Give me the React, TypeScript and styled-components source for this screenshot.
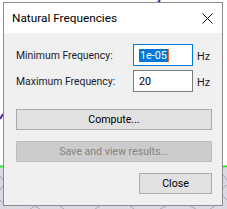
import React from "react";
import styled, { createGlobalStyle } from "styled-components";

const Global = createGlobalStyle`
  html, body { margin: 0; padding: 0; background: #ffffff; }
  body { width: 227px; height: 209px; overflow: hidden; font-family: Roboto, "Liberation Sans", Arial, sans-serif; }
`;

const Desktop = styled.div`
  position: relative;
  width: 227px;
  height: 209px;
  padding: 2px 0 0 3px;
  box-sizing: border-box;
  background: #ffffff;
`;

const Backdrop = styled.svg`
  position: absolute;
  left: 0;
  top: 0;
  width: 227px;
  height: 209px;
`;

const Dialog = styled.div`
  position: relative;
  width: 220px;
  height: 204px;
  box-sizing: border-box;
  border: 1px solid #8c8c8c;
  background: #f0f0f0;
  display: flex;
  flex-direction: column;
`;

const TitleBar = styled.div`
  height: 30px;
  background: #ffffff;
  display: flex;
  align-items: center;
  justify-content: space-between;
  padding: 0 9px 0 8px;
  flex-shrink: 0;
`;

const Title = styled.span`
  font-size: 11.8px;
  color: #000000;
`;

const CloseX = styled.svg`
  width: 11px;
  height: 11px;
  display: block;
`;

const Body = styled.div`
  display: flex;
  flex-direction: column;
  padding: 11px 10px 0 12px;
`;

const FieldRow = styled.div<{ $gap?: number }>`
  display: grid;
  grid-template-columns: 113px 60px auto;
  column-gap: 4px;
  align-items: center;
  margin-top: ${(p) => p.$gap ?? 0}px;
`;

const Label = styled.span`
  font-size: 10.4px;
  color: #1a1a2e;
`;

const Input = styled.div<{ $focused?: boolean }>`
  box-sizing: border-box;
  height: 22px;
  width: 60px;
  background: #ffffff;
  border: 1px solid ${(p) => (p.$focused ? "#0078d7" : "#7a7a7a")};
  display: flex;
  align-items: center;
  padding-left: 5px;
  font-size: 10.8px;
  color: #000000;
`;

const Selected = styled.span`
  background: #0078d7;
  color: #ffffff;
  line-height: 13px;
  padding: 0 1px 0 1px;
  border-right: 1px solid #e07020;
`;

const Unit = styled.span`
  font-size: 10.8px;
  color: #1a1a2e;
  margin-top: 3px;
`;

const Button = styled.div<{ $disabled?: boolean; $gap?: number; $width?: number }>`
  box-sizing: border-box;
  height: 21px;
  width: ${(p) => (p.$width ? `${p.$width}px` : "100%")};
  align-self: ${(p) => (p.$width ? "flex-end" : "stretch")};
  margin-top: ${(p) => p.$gap ?? 0}px;
  background: ${(p) => (p.$disabled ? "#cccccc" : "#e1e1e1")};
  border: 1px solid ${(p) => (p.$disabled ? "#bfbfbf" : "#adadad")};
  color: ${(p) => (p.$disabled ? "#838383" : "#000000")};
  font-size: 10.6px;
  display: flex;
  align-items: center;
  justify-content: center;
`;

export default function App() {
  return (
    <>
      <Global />
      <Desktop>
        <Backdrop viewBox="0 0 227 209">
          <rect x="0" y="168" width="227" height="41" fill="#d9d9e3" />
          <g stroke="#a6a6b6" strokeWidth="1" fill="none">
            <path d="M0 176 L3 180 M0 190 L3 186 M0 200 L3 203 M223 175 L227 180 M223 188 L227 185 M223 196 L227 200 M30 209 L35 206 L40 209 M60 206 L64 209 M95 209 L100 206 M130 206 L134 209 M160 209 L166 206 M190 206 L196 209 M210 209 L215 206" />
          </g>
          <line x1="0" y1="166.5" x2="4" y2="166.5" stroke="#22dd22" strokeWidth="2" />
          <line x1="222" y1="166.5" x2="227" y2="166.5" stroke="#22dd22" strokeWidth="2" />
          <line x1="160" y1="0" x2="155" y2="6" stroke="#5a22b0" strokeWidth="2" />
          <line x1="3" y1="114" x2="0" y2="119" stroke="#5a22b0" strokeWidth="2" />
        </Backdrop>
        <Dialog>
          <TitleBar>
            <Title>Natural Frequencies</Title>
            <CloseX viewBox="0 0 11 11">
              <path d="M0.5 0.5 L10.5 10.5 M10.5 0.5 L0.5 10.5" stroke="#111" strokeWidth="1" fill="none" />
            </CloseX>
          </TitleBar>
          <Body>
            <FieldRow $gap={0}>
              <Label>Minimum Frequency:</Label>
              <Input $focused>
                <Selected>1e-05</Selected>
              </Input>
              <Unit>Hz</Unit>
            </FieldRow>
            <FieldRow $gap={4}>
              <Label>Maximum Frequency:</Label>
              <Input>20</Input>
              <Unit>Hz</Unit>
            </FieldRow>
            <Button $gap={17}>Compute...</Button>
            <Button $gap={11} $disabled>Save and view results...</Button>
            <Button $gap={11} $width={73}>Close</Button>
          </Body>
        </Dialog>
      </Desktop>
    </>
  );
}
